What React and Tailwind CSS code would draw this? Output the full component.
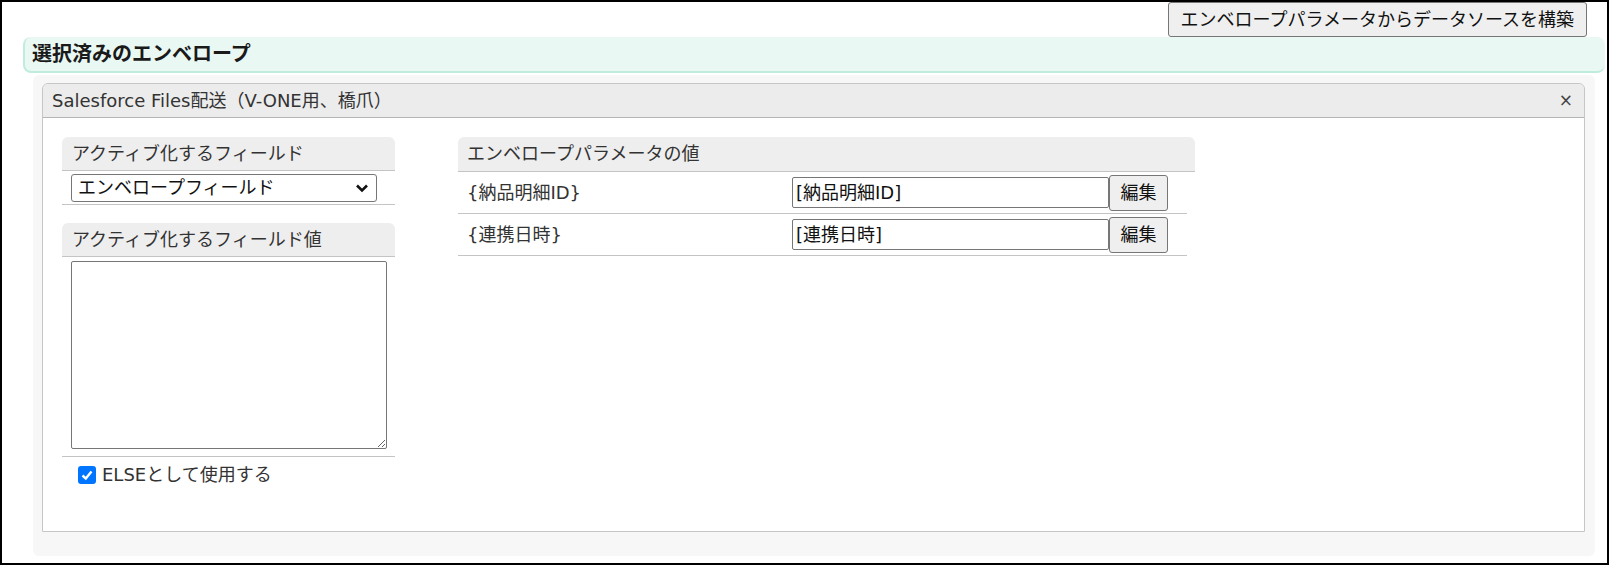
import { useState } from 'react';

const params = [
  { key: '{納品明細ID}', value: '[納品明細ID]' },
  { key: '{連携日時}', value: '[連携日時]' },
];

export default function App() {
  const [useElse, setUseElse] = useState(true);

  return (
    <div className="h-[565px] w-full overflow-hidden border-2 border-black bg-white text-[#333] font-['DejaVu_Sans','Noto_Sans_CJK_JP',sans-serif]">
      <div className="flex justify-end pr-[20px]">
        <button
          type="button"
          className="h-[35px] rounded-[3px] border border-[#767676] bg-[#efefef] px-[12px] text-[18px] leading-none text-[#111]"
        >
          エンベロープパラメータからデータソースを構築
        </button>
      </div>

      <div className="ml-[21px] mr-[2px] flex h-[36px] items-center rounded-lg border-b-2 border-l-2 border-[#c0ecdb] bg-[#e9f8f3] pl-[7px]">
        <h2 className="text-[20px] font-bold leading-none text-[#1a1a1a]">選択済みのエンベロープ</h2>
      </div>

      <div className="ml-[31px] mr-[12px] mt-[2px] rounded-md bg-[#f7f7f7] pb-[24px] pl-[9px] pr-[10px] pt-[8px]">
        <div className="rounded-t-md border border-[#c6c6c6]">
          <div className="flex h-[34px] items-center justify-between rounded-t-md border-b border-[#b5b5b5] bg-[#ececec] pl-[9px] pr-[11px]">
            <span className="text-[18px] leading-none">Salesforce Files配送（V-ONE用、橋爪）</span>
            <span className="text-[17px] leading-none text-[#444]">×</span>
          </div>

          <div className="flex h-[413px] gap-[63px] bg-white pl-[19px] pt-[19px]">
            {/* left column */}
            <div className="w-[333px]">
              <SectionHeader>アクティブ化するフィールド</SectionHeader>
              <div className="border-b border-[#c4c4c4] px-[9px] pb-[2px] pt-[3px]">
                <div className="flex h-[28px] w-[306px] items-center justify-between rounded-[3px] border border-[#767676] pl-[6px] pr-[7px]">
                  <span className="text-[18px] leading-none text-[#111]">エンベロープフィールド</span>
                  <svg width="14" height="10" viewBox="0 0 14 10" fill="none">
                    <polyline points="2,2.5 7,7.5 12,2.5" stroke="#111" strokeWidth="2.6" />
                  </svg>
                </div>
              </div>

              <div className="mt-[18px]">
                <SectionHeader>アクティブ化するフィールド値</SectionHeader>
              </div>
              <div className="border-b border-[#c4c4c4] pb-[7px] pl-[9px] pt-[4px]">
                <textarea
                  readOnly
                  className="block h-[188px] w-[316px] rounded-[2px] border border-[#767676] bg-white"
                />
              </div>

              <label className="flex items-center gap-[6px] pl-[16px] pt-[9px]">
                <span
                  onClick={() => setUseElse(!useElse)}
                  className={`flex h-[18px] w-[18px] items-center justify-center rounded-[3px] ${
                    useElse ? 'bg-[#0075ff]' : 'border border-[#767676] bg-white'
                  }`}
                >
                  {useElse && (
                    <svg width="14" height="14" viewBox="0 0 14 14" fill="none">
                      <polyline points="2.5,7.5 5.8,10.5 11.5,3.5" stroke="#fff" strokeWidth="2.4" />
                    </svg>
                  )}
                </span>
                <span className="text-[18px] leading-none">ELSEとして使用する</span>
              </label>
            </div>

            {/* right column */}
            <div className="w-[737px]">
              <div className="flex h-[35px] items-center rounded-t-md border-b border-[#c4c4c4] bg-[#eeeeee] pl-[9px]">
                <span className="text-[18px] leading-none">エンベロープパラメータの値</span>
              </div>
              {params.map((p) => (
                <div key={p.key} className="flex h-[42px] w-[729px] items-center border-b border-[#c4c4c4]">
                  <div className="w-[334px] pl-[9px] text-[18px] leading-none">{p.key}</div>
                  <div className="flex h-[31px] w-[317px] items-center rounded-[2px] border border-[#767676] px-[3px] text-[18px] leading-none text-[#111]">
                    {p.value}
                  </div>
                  <button
                    type="button"
                    className="h-[36px] w-[59px] rounded-[3px] border border-[#767676] bg-[#efefef] text-[18px] leading-none text-[#111]"
                  >
                    編集
                  </button>
                </div>
              ))}
            </div>
          </div>
        </div>
      </div>
    </div>
  );
}

function SectionHeader({ children }) {
  return (
    <div className="flex h-[34px] items-center rounded-t-md border-b border-[#c4c4c4] bg-[#eeeeee] pl-[10px]">
      <span className="text-[18px] leading-none">{children}</span>
    </div>
  );
}
